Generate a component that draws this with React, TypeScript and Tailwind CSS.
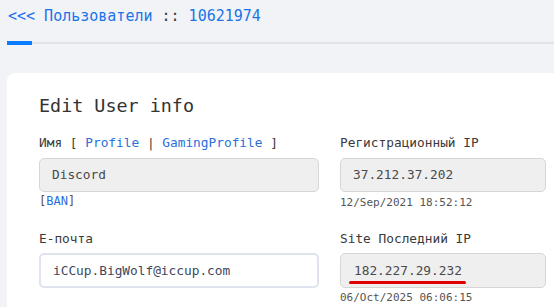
import React from "react";

const mono = { fontFamily: '"DejaVu Sans Mono", "Liberation Mono", monospace' };

export default function App() {
  return (
    <div className="w-[554px] h-[307px] overflow-hidden bg-[#f2f3f7]" style={mono}>
      <div className="h-[41px] pl-[8px] pt-[6px] text-[15px] leading-[20px] text-[#1a73e8] whitespace-nowrap">
        <span className="text-[#1f6ff0]">&lt;&lt;&lt;</span> Пользователи <span className="text-[#3a3a3a]">::</span> 10621974
      </div>
      <div className="flex items-start pl-[7px]">
        <div className="w-[25px] h-[4px] bg-[#0a7cff]" />
        <div className="flex-1 h-[2px] mt-[1px] bg-[#e1e3ea]" />
      </div>
      <div className="ml-[7px] mt-[28px] w-[600px] h-[300px] bg-white rounded-tl-[8px] pl-[32px] pt-[21px]">
        <div className="text-[18.4px] leading-[24px] text-[#333]">Edit User info</div>
        <div className="flex gap-[21px] mt-[17px]">
          <div className="w-[280px]">
            <div className="text-[12.8px] leading-[16px] text-[#3a3a3a] whitespace-nowrap">
              Имя [ <span className="text-[#2a6fdb]">Profile</span> | <span className="text-[#2a6fdb]">GamingProfile</span> ]
            </div>
            <div className="mt-[7px] h-[34px] rounded-[5px] border border-[#d6d6d6] bg-[#efefef] pl-[12px] flex items-center text-[12.8px] text-[#4a4a4a]">
              Discord
            </div>
            <div className="mt-[1px] text-[12px] leading-[16px] text-[#6b4a2a]">
              [<span className="text-[#2a6fdb]">BAN</span>]
            </div>
            <div className="mt-[22px] text-[12.8px] leading-[16px] text-[#3a3a3a]">E-почта</div>
            <div className="mt-[6px] h-[35px] rounded-[5px] border-2 border-[#dfe3ee] bg-white pl-[12px] flex items-center text-[12.8px] text-[#3d475c]">
              iCCup.BigWolf@iccup.com
            </div>
          </div>
          <div className="w-[206px]">
            <div className="text-[12.8px] leading-[16px] text-[#3a3a3a] whitespace-nowrap">Регистрационный IP</div>
            <div className="mt-[7px] h-[34px] rounded-[5px] border border-[#d6d6d6] bg-[#efefef] pl-[12px] flex items-center text-[12.8px] text-[#4a4a4a]">
              37.212.37.202
            </div>
            <div className="mt-[4px] text-[11px] leading-[14px] text-[#555]">12/Sep/2021 18:52:12</div>
            <div className="mt-[21px] text-[12.8px] leading-[16px] text-[#3a3a3a] whitespace-nowrap">Site Последний IP</div>
            <div className="relative mt-[6px] h-[35px] rounded-[5px] border border-[#d6d6d6] bg-[#efefef] pl-[13px] flex items-center text-[12.8px] text-[#4a4a4a]">
              182.227.29.232
              <div className="absolute left-[8px] top-[27px] w-[117px] h-[3px] bg-[#e00000] rounded-full" />
            </div>
            <div className="mt-[3px] text-[11px] leading-[14px] text-[#555]">06/Oct/2025 06:06:15</div>
          </div>
        </div>
      </div>
    </div>
  );
}
